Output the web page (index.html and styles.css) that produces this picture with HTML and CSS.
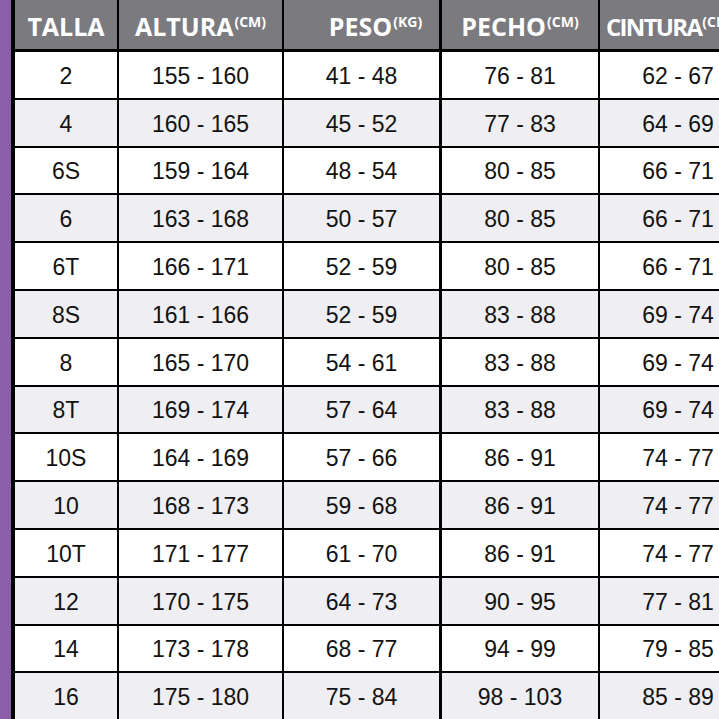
FILE: index.html
```html
<!DOCTYPE html>
<html lang="es">
<head>
<meta charset="utf-8">
<title>Tabla de tallas</title>
<link rel="stylesheet" href="styles.css">
</head>
<body>
<div class="page">
  <div class="side"></div>
  <div class="chart">
    <div class="cell head"><span>TALLA</span></div>
    <div class="cell head"><span>ALTURA<sup>(CM)</sup></span></div>
    <div class="cell head head-peso"><span>PESO<sup>(KG)</sup></span></div>
    <div class="cell head"><span>PECHO<sup>(CM)</sup></span></div>
    <div class="cell head head-left"><span class="tight">CINTURA</span><span><sup>(CM)</sup></span></div>

    <div class="cell">2</div><div class="cell">155 - 160</div><div class="cell">41 - 48</div><div class="cell">76 - 81</div><div class="cell">62 - 67</div>
    <div class="cell alt">4</div><div class="cell alt">160 - 165</div><div class="cell alt">45 - 52</div><div class="cell alt">77 - 83</div><div class="cell alt">64 - 69</div>
    <div class="cell">6S</div><div class="cell">159 - 164</div><div class="cell">48 - 54</div><div class="cell">80 - 85</div><div class="cell">66 - 71</div>
    <div class="cell alt">6</div><div class="cell alt">163 - 168</div><div class="cell alt">50 - 57</div><div class="cell alt">80 - 85</div><div class="cell alt">66 - 71</div>
    <div class="cell">6T</div><div class="cell">166 - 171</div><div class="cell">52 - 59</div><div class="cell">80 - 85</div><div class="cell">66 - 71</div>
    <div class="cell alt">8S</div><div class="cell alt">161 - 166</div><div class="cell alt">52 - 59</div><div class="cell alt">83 - 88</div><div class="cell alt">69 - 74</div>
    <div class="cell">8</div><div class="cell">165 - 170</div><div class="cell">54 - 61</div><div class="cell">83 - 88</div><div class="cell">69 - 74</div>
    <div class="cell alt">8T</div><div class="cell alt">169 - 174</div><div class="cell alt">57 - 64</div><div class="cell alt">83 - 88</div><div class="cell alt">69 - 74</div>
    <div class="cell">10S</div><div class="cell">164 - 169</div><div class="cell">57 - 66</div><div class="cell">86 - 91</div><div class="cell">74 - 77</div>
    <div class="cell alt">10</div><div class="cell alt">168 - 173</div><div class="cell alt">59 - 68</div><div class="cell alt">86 - 91</div><div class="cell alt">74 - 77</div>
    <div class="cell">10T</div><div class="cell">171 - 177</div><div class="cell">61 - 70</div><div class="cell">86 - 91</div><div class="cell">74 - 77</div>
    <div class="cell alt">12</div><div class="cell alt">170 - 175</div><div class="cell alt">64 - 73</div><div class="cell alt">90 - 95</div><div class="cell alt">77 - 81</div>
    <div class="cell">14</div><div class="cell">173 - 178</div><div class="cell">68 - 77</div><div class="cell">94 - 99</div><div class="cell">79 - 85</div>
    <div class="cell alt">16</div><div class="cell alt">175 - 180</div><div class="cell alt">75 - 84</div><div class="cell alt">98 - 103</div><div class="cell alt">85 - 89</div>
  </div>
</div>
</body>
</html>
```
FILE: styles.css
```css
html, body {
  margin: 0;
  padding: 0;
  overflow: hidden;
  background: #ffffff;
}

.page {
  display: flex;
  width: 780px;
  height: 760px;
}

.side {
  width: 11px;
  flex: 0 0 11px;
  background: #8b5ea8;
}

.chart {
  display: grid;
  grid-template-columns: 104px 165px 158px 158px 158px;
  grid-template-rows: 52px repeat(14, 47.8px);
  border-left: 4px solid #000;
  align-self: flex-start;
}

.cell {
  box-sizing: border-box;
  display: flex;
  align-items: center;
  justify-content: center;
  padding-top: 3px;
  border-right: 2px solid #000;
  border-bottom: 2px solid #000;
  background: #ffffff;
  color: #121212;
  font-family: "Liberation Sans", Arial, sans-serif;
  font-size: 23px;
  white-space: nowrap;
  overflow: hidden;
}

.cell:nth-child(5n+3) {
  border-right-width: 3px;
}

.cell.alt {
  background: #eeeef3;
}

.head {
  background: #7b7a7f;
  color: #ffffff;
  font-family: "Open Sans", "DejaVu Sans", sans-serif;
  font-weight: 700;
  font-size: 25px;
  border-bottom-width: 3px;
  padding-top: 3px;
}

.head span {
  white-space: nowrap;
}

.head .tight {
  letter-spacing: -1.7px;
  font-size: 24px;
}

.head sup {
  font-size: 14px;
  font-weight: 700;
  vertical-align: top;
  position: relative;
  top: 3px;
  margin-left: 1px;
}

.head-peso {
  padding-left: 28px;
}

.head-left {
  justify-content: flex-start;
  padding-left: 6px;
}
```
